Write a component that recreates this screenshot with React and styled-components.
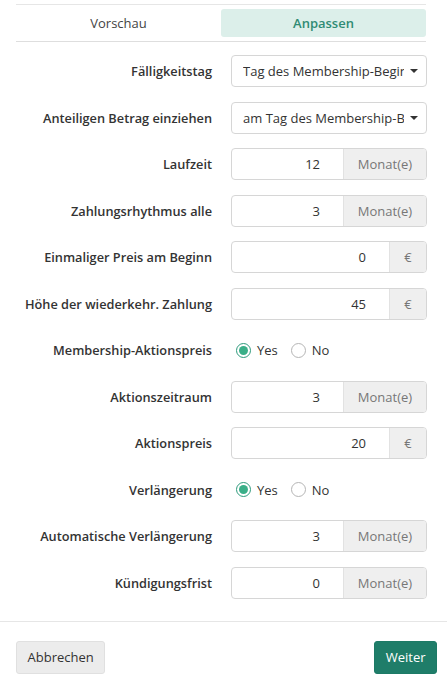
import styled, { createGlobalStyle } from "styled-components";

const GlobalStyle = createGlobalStyle`
  body {
    margin: 0;
    background: #fff;
    font-family: "Open Sans", "Liberation Sans", sans-serif;
    color: #333;
  }
  * { box-sizing: border-box; }
`;

const Page = styled.div`
  width: 447px;
  padding-top: 4px;
`;

const Tabs = styled.div`
  margin: 0 21px 0 16px;
  padding: 4px 0;
  border-top: 1px solid #e6e6e6;
  border-bottom: 1px solid #dedede;
  display: grid;
  grid-template-columns: 1fr 1fr;
`;

const Tab = styled.div`
  height: 28px;
  display: flex;
  align-items: center;
  justify-content: center;
  font-size: 13px;
  font-weight: ${(p) => (p.$active ? 600 : 400)};
  color: ${(p) => (p.$active ? "#2f8b74" : "#444")};
  background: ${(p) => (p.$active ? "#dcefea" : "transparent")};
  border-radius: 3px;
`;

const Form = styled.div`
  padding: 13px 20px 0 0;
  display: grid;
  grid-template-columns: 1fr 196px;
  column-gap: 19px;
  row-gap: 14.5px;
  grid-auto-rows: 32px;
`;

const Label = styled.div`
  display: flex;
  align-items: center;
  justify-content: flex-end;
  font-size: 12.75px;
  font-weight: 600;
  color: #333;
  white-space: nowrap;
`;

const SelectBox = styled.div`
  display: flex;
  align-items: center;
  border: 1px solid #d6d6d6;
  border-radius: 4px;
  padding: 0 8px 0 11px;
  font-size: 13px;
  color: #333;
  background: #fff;
`;

const SelectText = styled.span`
  flex: 1;
  overflow: hidden;
  white-space: nowrap;
  margin-right: 6px;
`;

const Caret = styled.span`
  width: 0;
  height: 0;
  border-left: 4px solid transparent;
  border-right: 4px solid transparent;
  border-top: 4px solid #333;
`;

const InputGroup = styled.div`
  display: flex;
  border: 1px solid #d6d6d6;
  border-radius: 4px;
  overflow: hidden;
  background: #fff;
`;

const NumberInput = styled.input`
  flex: 1;
  min-width: 0;
  border: none;
  outline: none;
  text-align: right;
  padding: 0 23px 0 8px;
  font-family: inherit;
  font-size: 13px;
  color: #333;
  background: transparent;
`;

const Addon = styled.div`
  width: ${(p) => p.$width}px;
  display: flex;
  align-items: center;
  justify-content: center;
  background: #efefef;
  border-left: 1px solid #e2e2e2;
  color: #777;
  font-size: 13px;
`;

const RadioGroup = styled.div`
  display: flex;
  align-items: center;
  gap: 13px;
  padding-left: 5px;
`;

const RadioOption = styled.label`
  display: flex;
  align-items: center;
  gap: 6px;
  font-size: 13px;
  color: #333;
`;

const RadioDot = styled.span`
  width: 15px;
  height: 15px;
  border-radius: 50%;
  border: 1px solid ${(p) => (p.$checked ? "#2e9a7c" : "#b5b5b5")};
  display: flex;
  align-items: center;
  justify-content: center;
  &::after {
    content: "";
    width: 9px;
    height: 9px;
    border-radius: 50%;
    background: ${(p) => (p.$checked ? "#3aaf88" : "transparent")};
  }
`;

const Footer = styled.div`
  margin-top: 22px;
  border-top: 1px solid #e6e6e6;
  padding: 19px 10px 0 16px;
  display: flex;
  justify-content: space-between;
`;

const Button = styled.button`
  height: 33px;
  padding: 0 10.5px;
  border-radius: 3px;
  font-family: inherit;
  font-size: 13px;
  border: 1px solid ${(p) => (p.$primary ? "#1d7a66" : "#e0e0e0")};
  background: ${(p) => (p.$primary ? "#1f7d69" : "#ececec")};
  color: ${(p) => (p.$primary ? "#fff" : "#333")};
`;

const Field = ({ value, unit }) => (
  <InputGroup>
    <NumberInput defaultValue={value} />
    <Addon $width={unit === "€" ? 37 : 83}>{unit}</Addon>
  </InputGroup>
);

const Radio = () => (
  <RadioGroup>
    <RadioOption>
      <RadioDot $checked />
      Yes
    </RadioOption>
    <RadioOption>
      <RadioDot />
      No
    </RadioOption>
  </RadioGroup>
);

const rows = [
  { label: "Fälligkeitstag", select: "Tag des Membership-Beginns" },
  { label: "Anteiligen Betrag einziehen", select: "am Tag des Membership-Beginns" },
  { label: "Laufzeit", value: "12", unit: "Monat(e)" },
  { label: "Zahlungsrhythmus alle", value: "3", unit: "Monat(e)" },
  { label: "Einmaliger Preis am Beginn", value: "0", unit: "€" },
  { label: "Höhe der wiederkehr. Zahlung", value: "45", unit: "€" },
  { label: "Membership-Aktionspreis", radio: true },
  { label: "Aktionszeitraum", value: "3", unit: "Monat(e)" },
  { label: "Aktionspreis", value: "20", unit: "€" },
  { label: "Verlängerung", radio: true },
  { label: "Automatische Verlängerung", value: "3", unit: "Monat(e)" },
  { label: "Kündigungsfrist", value: "0", unit: "Monat(e)" },
];

export default function App() {
  return (
    <Page>
      <GlobalStyle />
      <Tabs>
        <Tab>Vorschau</Tab>
        <Tab $active>Anpassen</Tab>
      </Tabs>
      <Form>
        {rows.map((row, i) => [
          <Label key={"l" + i}>{row.label}</Label>,
          row.select ? (
            <SelectBox key={"c" + i}>
              <SelectText>{row.select}</SelectText>
              <Caret />
            </SelectBox>
          ) : row.radio ? (
            <Radio key={"c" + i} />
          ) : (
            <Field key={"c" + i} value={row.value} unit={row.unit} />
          ),
        ])}
      </Form>
      <Footer>
        <Button>Abbrechen</Button>
        <Button $primary>Weiter</Button>
      </Footer>
    </Page>
  );
}
